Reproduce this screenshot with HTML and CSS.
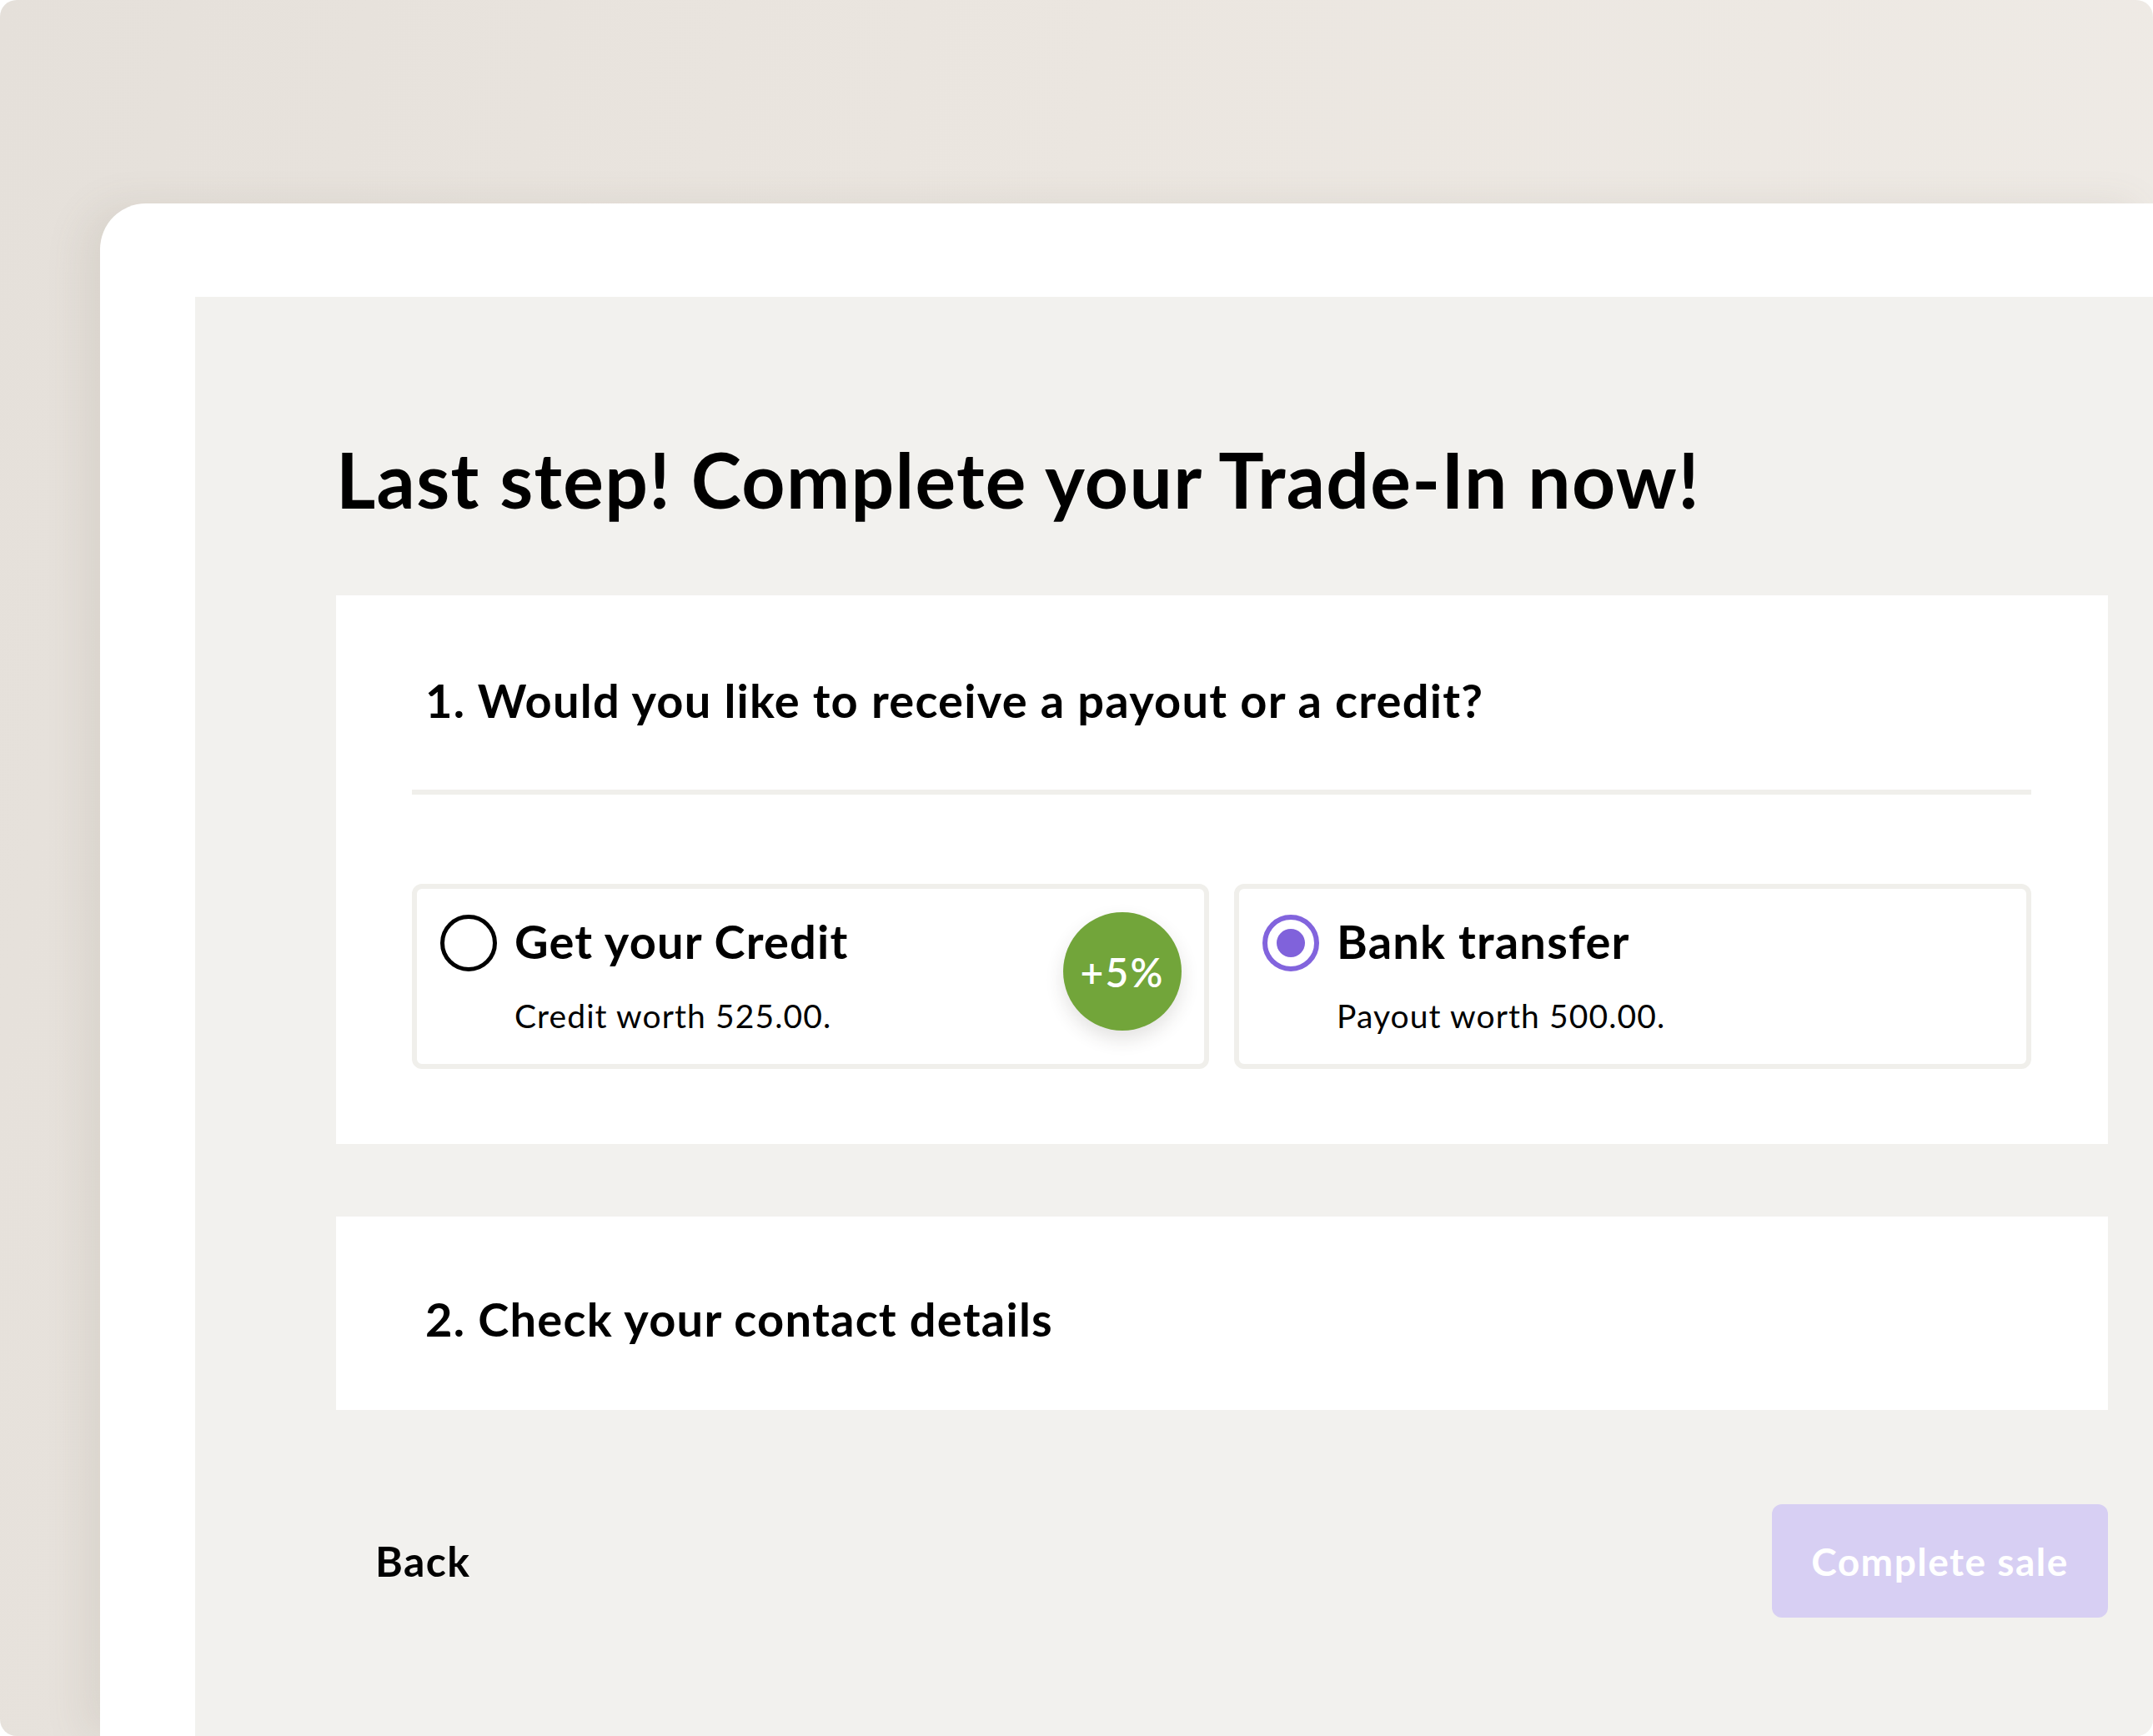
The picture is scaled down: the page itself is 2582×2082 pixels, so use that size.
FILE: index.html
```html
<!DOCTYPE html>
<html lang="en">
<head>
<meta charset="utf-8">
<title>Complete your Trade-In</title>
<link rel="stylesheet" href="styles.css">
</head>
<body>
<div class="scene">
  <div class="frame">
    <div class="screen">
      <h1 class="page-title">Last step! Complete your Trade-In now!</h1>
      <section class="card card-payout">
        <h2 class="card-heading">1. Would you like to receive a payout or a credit?</h2>
        <div class="divider"></div>
        <div class="options">
          <div class="option">
            <span class="radio"></span>
            <span class="option-text">
              <span class="option-title">Get your Credit</span>
              <span class="option-sub">Credit worth 525.00.</span>
            </span>
            <span class="badge">+5%</span>
          </div>
          <div class="option">
            <span class="radio radio-checked"></span>
            <span class="option-text">
              <span class="option-title">Bank transfer</span>
              <span class="option-sub">Payout worth 500.00.</span>
            </span>
          </div>
        </div>
      </section>
      <section class="card card-contact">
        <h2 class="card-heading">2. Check your contact details</h2>
      </section>
      <div class="actions">
        <button class="btn-back" type="button">Back</button>
        <button class="btn-complete" type="button">Complete sale</button>
      </div>
    </div>
  </div>
</div>
</body>
</html>
```

FILE: styles.css
```css
html, body {
  margin: 0;
  padding: 0;
  background: #ffffff;
}

body {
  width: 2582px;
  height: 2082px;
  overflow: hidden;
  font-family: "Lato", "Inter", sans-serif;
  color: #000;
}

.scene {
  width: 2582px;
  height: 2082px;
  box-sizing: border-box;
  padding: 244px 0 0 120px;
  border-radius: 20px;
  overflow: hidden;
  background: linear-gradient(100deg, #e5e0da 0%, #ebe6e0 45%, #efebe6 100%);
}

.frame {
  height: 100%;
  box-sizing: border-box;
  padding: 112px 0 0 114px;
  background: #ffffff;
  border-top-left-radius: 55px;
  box-shadow: -22px 0 46px rgba(110, 95, 75, 0.10);
}

.screen {
  height: 100%;
  box-sizing: border-box;
  padding: 0 54px 0 169px;
  background: #f2f1ee;
  overflow: hidden;
}

.page-title {
  margin: 164px 0 0 0;
  font-size: 91px;
  line-height: 110px;
  font-weight: 700;
  letter-spacing: 1.35px;
}

.card {
  background: #ffffff;
  box-sizing: border-box;
}

.card-payout {
  margin-top: 84px;
  padding: 92px 92px 90px 91px;
}

.card-heading {
  margin: 0;
  padding-left: 16px;
  font-size: 56px;
  line-height: 68px;
  font-weight: 700;
  letter-spacing: 1.25px;
}

.divider {
  margin-top: 73px;
  height: 6px;
  background: #f0efeb;
}

.options {
  margin-top: 107px;
  display: grid;
  grid-template-columns: 1fr 1fr;
  gap: 30px;
}

.option {
  position: relative;
  display: flex;
  align-items: flex-start;
  padding: 29px 28px 33px 28px;
  border: 6px solid #f0efeb;
  border-radius: 12px;
}

.radio {
  flex: none;
  width: 68px;
  height: 68px;
  margin-top: 2px;
  box-sizing: border-box;
  border: 5px solid #000;
  border-radius: 50%;
  display: flex;
  align-items: center;
  justify-content: center;
}

.radio-checked {
  border: 6px solid #8264dd;
}

.radio-checked::after {
  content: "";
  width: 34px;
  height: 34px;
  border-radius: 50%;
  background: #8062db;
}

.option-text {
  display: flex;
  flex-direction: column;
  margin-left: 21px;
}

.option-title {
  font-size: 56px;
  line-height: 68px;
  font-weight: 700;
  letter-spacing: 1.2px;
}

.option-sub {
  margin-top: 30px;
  font-size: 39px;
  line-height: 50px;
  font-weight: 400;
  letter-spacing: 1.1px;
}

.badge {
  position: absolute;
  right: 27px;
  top: 28px;
  width: 142px;
  height: 142px;
  border-radius: 50%;
  background: #72a53a;
  color: #ffffff;
  display: flex;
  align-items: center;
  justify-content: center;
  font-size: 48px;
  font-weight: 600;
  letter-spacing: 2.2px;
  box-shadow: 0 10px 22px rgba(60, 50, 40, 0.14);
}

.card-contact {
  margin-top: 87px;
  height: 232px;
  padding: 89px 91px 0 91px;
}

.actions {
  margin-top: 113px;
  display: flex;
  justify-content: space-between;
  align-items: center;
}

.btn-back {
  margin-left: 47px;
  padding: 0;
  border: 0;
  background: none;
  font-family: inherit;
  font-size: 50px;
  line-height: 60px;
  font-weight: 700;
  letter-spacing: 1.4px;
  color: #000;
}

.btn-complete {
  width: 403px;
  height: 136px;
  padding: 0;
  border: 0;
  border-radius: 12px;
  background: #d7cff3;
  color: #ffffff;
  font-family: inherit;
  font-size: 46px;
  font-weight: 700;
  letter-spacing: 1.5px;
}
```
